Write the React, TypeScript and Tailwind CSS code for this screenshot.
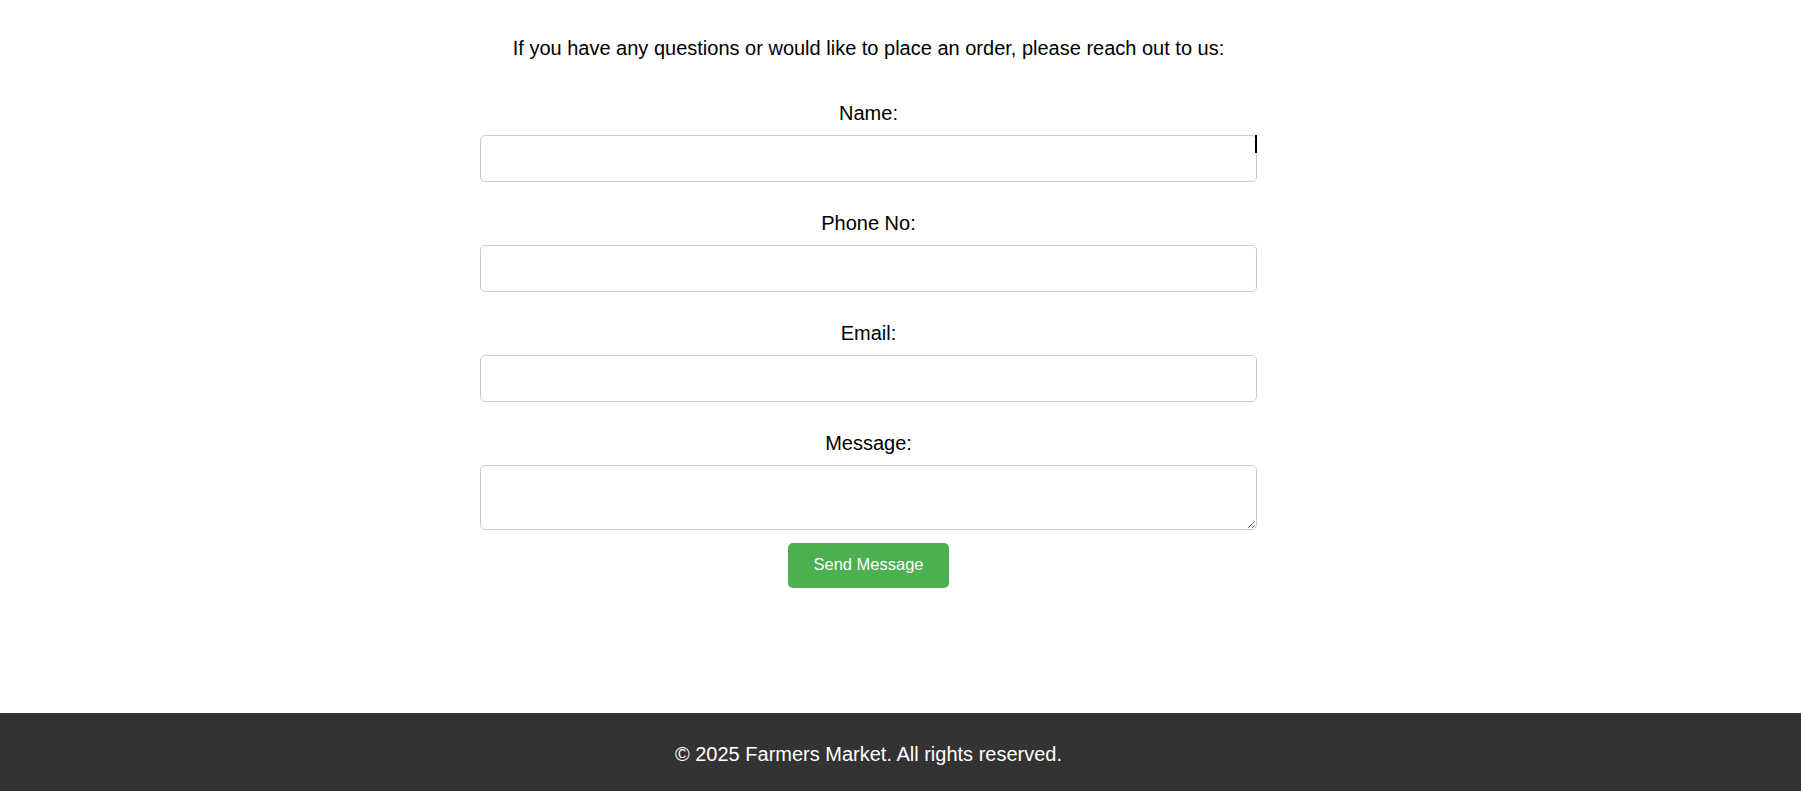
import { useState } from "react";

const fields = [
  { name: "name", label: "Name:", type: "text" },
  { name: "phone", label: "Phone No:", type: "tel" },
  { name: "email", label: "Email:", type: "email" },
];

const App = () => {
  const [formData, setFormData] = useState<Record<string, string>>({
    name: "",
    phone: "",
    email: "",
    message: "",
  });

  const handleChange = (e: any) => {
    const { name, value } = e.target;
    setFormData({ ...formData, [name]: value });
  };

  const handleSubmit = (e: any) => {
    e.preventDefault();
  };

  return (
    <div className="min-h-screen flex flex-col bg-white font-['Liberation_Sans',Arial,sans-serif] text-black">
      <main className="flex-1 pr-[64px] pt-[37px]">
        <div className="w-[777px] mx-auto">
          <p className="text-[20px] leading-[23px] text-center mb-[42px]">
            If you have any questions or would like to place an order, please reach out to us:
          </p>

          <form onSubmit={handleSubmit}>
            {fields.map((f, i) => (
              <div key={f.name} className="mb-[30px]">
                <label htmlFor={f.name} className="block text-[20px] leading-[23px] text-center mb-[10px]">
                  {f.label}
                </label>
                <div className="relative">
                  <input
                    id={f.name}
                    name={f.name}
                    type={f.type}
                    value={formData[f.name]}
                    onChange={handleChange}
                    className="block w-full h-[47px] px-[10px] border border-[#cccccc] rounded-[5px] outline-none text-[16px]"
                  />
                  {/* text cursor left in the screenshot */}
                  {i === 0 && <span className="absolute right-0 top-0 w-[2px] h-[18px] bg-black" />}
                </div>
              </div>
            ))}

            <div>
              <label htmlFor="message" className="block text-[20px] leading-[23px] text-center mb-[10px]">
                Message:
              </label>
              <textarea
                id="message"
                name="message"
                value={formData.message}
                onChange={handleChange}
                className="block w-full h-[65px] px-[10px] py-[8px] border border-[#cccccc] rounded-[5px] outline-none text-[16px]"
              />
            </div>

            <button
              type="submit"
              className="block mx-auto mt-[13px] w-[161px] h-[45px] pb-[2px] bg-[#4caf50] text-white text-[16.5px] rounded-[5px]"
            >
              Send Message
            </button>
          </form>
        </div>
      </main>

      <footer className="h-[78px] bg-[#333333] text-white pr-[64px] pt-[29px]">
        <p className="text-center text-[20px] leading-[24px]">© 2025 Farmers Market. All rights reserved.</p>
      </footer>
    </div>
  );
};

export default App;
